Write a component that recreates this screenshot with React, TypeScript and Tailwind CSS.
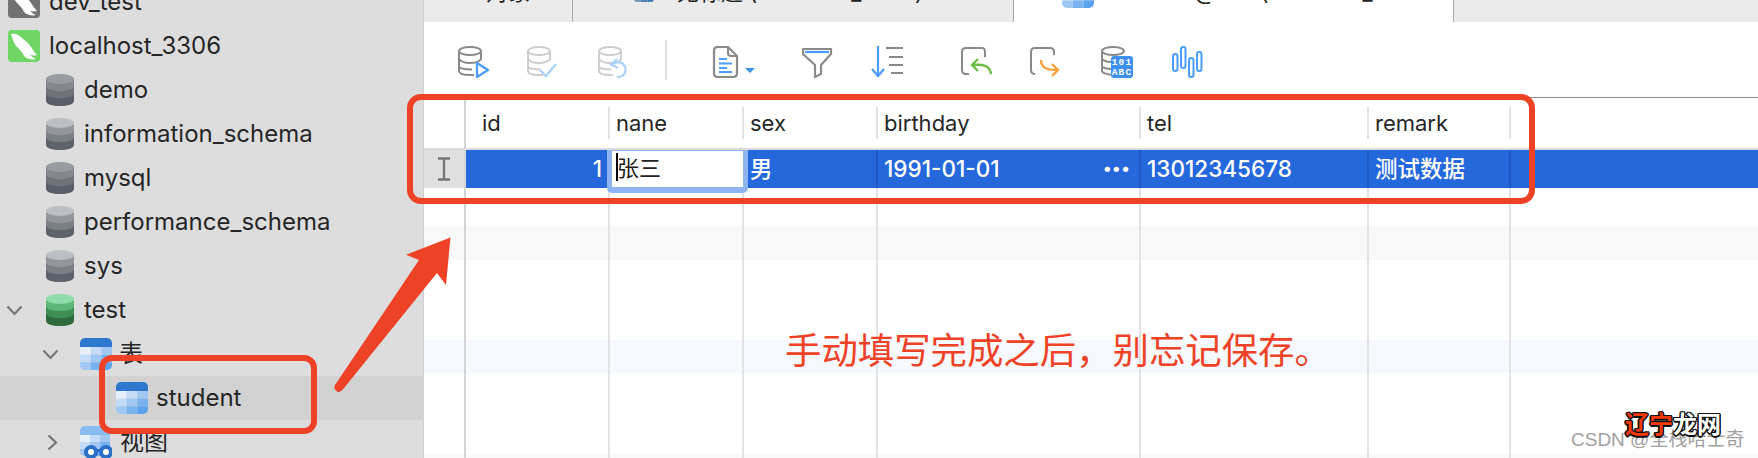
import React from "react";

function Dolphin({ bg }: { bg: string }) {
  return (
    <svg width="32" height="32" viewBox="0 0 32 32" className="shrink-0">
      <rect width="32" height="32" rx="4" fill={bg} />
      <path d="M3 4 C6 3 10 4 13 7 C16 10 20 12 23 17 C25 20 27 23 29 25 C27 26 24 25 22 25 C24 27 26 28 28 29 C24 30 19 29 16 26 C15 24 14 22 12 20 C9 17 6 14 5 10 Z" fill="#fff" />
    </svg>
  );
}

function Db({ c }: { c: string[] }) {
  return (
    <svg width="28" height="32" viewBox="0 0 28 32" className="shrink-0">
      <path d="M0 5 V27 C0 30 6 32 14 32 C22 32 28 30 28 27 V5 Z" fill={c[3]} />
      <path d="M0 5 V19 C0 22 6 24 14 24 C22 24 28 22 28 19 V5 Z" fill={c[2]} />
      <path d="M0 5 V12 C0 15 6 17 14 17 C22 17 28 15 28 12 V5 Z" fill={c[1]} />
      <ellipse cx="14" cy="5" rx="14" ry="5" fill={c[0]} />
    </svg>
  );
}

function TableIcon({ size = 32, className = "" }: { size?: number; className?: string }) {
  const cells = ["#e6f1fd", "#c4dcf7", "#a0c8f3", "#c4dcf7", "#a0c8f3", "#78b3f0", "#a0c8f3", "#78b3f0", "#5aa3ec"];
  return (
    <svg width={size} height={size} viewBox="0 0 32 32" className={`shrink-0 ${className}`}>
      <defs>
        <clipPath id="tbl"><rect width="32" height="32" rx="5" /></clipPath>
      </defs>
      <g clipPath="url(#tbl)">
        <rect width="32" height="9" fill="#2f78d0" />
        {cells.map((c, i) => (
          <rect key={i} x={(i % 3) * 10.67} y={9 + Math.floor(i / 3) * 7.67} width="10.67" height="7.67" fill={c} />
        ))}
      </g>
    </svg>
  );
}

function ViewIcon() {
  const cells = ["#e6f1fd", "#c4dcf7", "#a0c8f3", "#c4dcf7", "#a0c8f3", "#78b3f0", "#a0c8f3", "#78b3f0", "#5aa3ec"];
  return (
    <svg width="32" height="32" viewBox="0 0 32 32" className="shrink-0">
      <defs>
        <clipPath id="vw"><rect width="30" height="30" rx="5" /></clipPath>
      </defs>
      <g clipPath="url(#vw)">
        <rect width="30" height="9" fill="#8bbcf0" />
        {cells.map((c, i) => (
          <rect key={i} x={(i % 3) * 10} y={9 + Math.floor(i / 3) * 7} width="10" height="7" fill={c} />
        ))}
      </g>
      <rect x="10" y="23" width="12" height="3" fill="#2a70c8" />
      <circle cx="11" cy="26" r="5" fill="#fff" stroke="#2a70c8" strokeWidth="4" />
      <circle cx="26" cy="26" r="5" fill="#fff" stroke="#2a70c8" strokeWidth="4" />
    </svg>
  );
}

function ChevDown() {
  return (
    <svg width="17" height="11" viewBox="0 0 17 11" className="shrink-0">
      <path d="M1.5 1.5 L8.5 9 L15.5 1.5" fill="none" stroke="#777" strokeWidth="2.2" />
    </svg>
  );
}

function ChevRight() {
  return (
    <svg width="11" height="17" viewBox="0 0 11 17" className="shrink-0">
      <path d="M1.5 1.5 L9 8.5 L1.5 15.5" fill="none" stroke="#777" strokeWidth="2.2" />
    </svg>
  );
}

const dark = ["#989ba0", "#83878d", "#6f747b", "#5a5f67"];
const light = ["#bcbfc3", "#93979c", "#7b7f86", "#5e636b"];
const green = ["#8fdcaa", "#5cb874", "#3f8f55", "#2f6b3f"];

function Sidebar() {
  const label = "text-[24px] text-[#262626] whitespace-nowrap";
  return (
    <div className="w-[424px] shrink-0 bg-[#dddddd] border-r border-[#d0d0d0] -mt-[20px] h-[500px] overflow-hidden">
      <div className="flex items-center h-[44px] pl-[8px] gap-[9px]">
        <Dolphin bg="#727272" />
        <span className={label}>dev_test</span>
      </div>
      <div className="flex items-center h-[44px] pl-[8px] gap-[9px]">
        <Dolphin bg="#6fd565" />
        <span className={label}>localhost_3306</span>
      </div>
      {[
        ["demo", dark],
        ["information_schema", light],
        ["mysql", dark],
        ["performance_schema", light],
        ["sys", light],
      ].map(([name, c]) => (
        <div key={name as string} className="flex items-center h-[44px] pl-[46px] gap-[10px]">
          <Db c={c as string[]} />
          <span className={label}>{name as string}</span>
        </div>
      ))}
      <div className="flex items-center h-[44px] pl-[6px]">
        <div className="mr-[23px]"><ChevDown /></div>
        <Db c={green} />
        <span className={`${label} ml-[10px]`}>test</span>
      </div>
      <div className="flex items-center h-[44px] pl-[42px]">
        <div className="mr-[21px]"><ChevDown /></div>
        <TableIcon />
        <span className={`${label} ml-[7px]`}>表</span>
      </div>
      <div className="flex items-center h-[44px] pl-[116px] gap-[8px] bg-[#d2d2d2]">
        <TableIcon />
        <span className={label}>student</span>
      </div>
      <div className="flex items-center h-[44px] pl-[47px]">
        <div className="mr-[22px] flex"><ChevRight /></div>
        <ViewIcon />
        <span className={`${label} ml-[8px]`}>视图</span>
      </div>
    </div>
  );
}

function Tabs() {
  return (
    <div className="flex h-[22px] shrink-0 bg-[#ebebeb] overflow-hidden text-[22px] text-[#222]">
      <div className="w-[149px] shrink-0 border-r border-[#aaaaaa] pl-[62px]">
        <div className="-mt-[24px] flex items-center h-[32px]">对象</div>
      </div>
      <div className="w-[440px] shrink-0 pl-[61px]">
        <div className="-mt-[24px] flex items-center h-[32px] whitespace-nowrap">
          <TableIcon size={20} className="brightness-75" />
          <span className="ml-[23px]">无标题 (localhost_3306)</span>
        </div>
      </div>
      <div className="w-[441px] shrink-0 bg-white border-x border-[#aaaaaa] pl-[48px] overflow-hidden">
        <div className="-mt-[24px] flex items-center h-[32px] whitespace-nowrap">
          <TableIcon />
          <span className="ml-[16px]">student @test (localhost_33</span>
        </div>
      </div>
    </div>
  );
}

const G = "#8a8a8a";
const B = "#4a9cff";
const FG = "#cdcdcd";
const FB = "#abd2fb";

function Cyl({ s }: { s: string }) {
  return (
    <g fill="none" stroke={s} strokeWidth="2">
      <ellipse cx="12" cy="5" rx="11" ry="4" />
      <path d="M1 5 V25 C1 27 4 29 12 29 H16" />
      <path d="M23 5 V14" />
      <path d="M1 13 C3 16 8 17 12 17 C16 17 21 16 23 13" />
      <path d="M1 21 C3 23 8 23.5 14 23.5" />
    </g>
  );
}

function Tool({ w = 32, className = "", children }: { w?: number; className?: string; children: React.ReactNode }) {
  return (
    <svg width={w} height="32" viewBox={`0 0 ${w} 32`} className={`shrink-0 ${className}`}>
      {children}
    </svg>
  );
}

function Toolbar() {
  return (
    <div className="flex items-start h-[76px] shrink-0 pt-[24px] pl-[34px] border-b border-[#8a8a8a]">
      <Tool>
        <Cyl s={G} />
        <path d="M19 17 L30 24 L19 31 Z" fill="#fff" stroke={B} strokeWidth="2.2" strokeLinejoin="round" />
      </Tool>
      <Tool className="ml-[37px]">
        <Cyl s={FG} />
        <path d="M13 24 L19 30 L29 18" fill="none" stroke={FB} strokeWidth="2.4" />
      </Tool>
      <Tool className="ml-[39px]">
        <Cyl s={FG} />
        <circle cx="21" cy="24" r="8" fill="#fff" />
        <path d="M19 31 A7.5 7.5 0 1 0 15 18" fill="none" stroke={FB} strokeWidth="2.2" />
        <path d="M19 13 L13 18.5 L20 22" fill="none" stroke={FB} strokeWidth="2.2" />
      </Tool>
      <div className="ml-[35px] -mt-[6px] w-[2px] h-[40px] bg-[#e0e0e0]" />
      <Tool w={46} className="ml-[43px]">
        <path d="M8 1 H18 L27 10 V27 Q27 31 23 31 H8 Q4 31 4 27 V5 Q4 1 8 1 Z" fill="none" stroke={G} strokeWidth="2.2" />
        <path d="M18 1 V7 Q18 10 21 10 H27" fill="none" stroke={G} strokeWidth="2" />
        <path d="M9 13 H17 M9 17.5 H22 M9 22 H17 M9 26 H22" stroke={B} strokeWidth="2" />
        <path d="M35 22 H45 L40 27 Z" fill="#3f8fef" />
      </Tool>
      <Tool className="ml-[46px]">
        <path d="M1 3 H29 V8 L19 19 V28 L13 31 V19 L1 8 Z" fill="none" stroke={G} strokeWidth="2.2" strokeLinejoin="round" />
        <path d="M3 6 H27" stroke={B} strokeWidth="2.2" />
      </Tool>
      <Tool className="ml-[37px]">
        <path d="M7 0 V29 M1 23 L7 30 L13 23" fill="none" stroke={B} strokeWidth="2.2" />
        <path d="M15 2 H32 M18 11 H32 M18 19 H32 M20 27 H32" stroke={G} strokeWidth="2.2" />
      </Tool>
      <Tool className="ml-[57px]">
        <path d="M22 2 H6 Q2 2 2 6 V24 Q2 28 6 28 H9" fill="none" stroke={G} strokeWidth="2" />
        <path d="M22 2 Q25 2 25 6 V11" fill="none" stroke={G} strokeWidth="2" />
        <path d="M31 28 C30 20 24 18 13 19 M18 13 L12 19 L18 25" fill="none" stroke="#6cbd45" strokeWidth="2.4" />
      </Tool>
      <Tool className="ml-[37px]">
        <path d="M6 28 Q2 28 2 24 V6 Q2 2 6 2 H21 Q25 2 25 6 V9" fill="none" stroke={G} strokeWidth="2" />
        <path d="M12 14 C12 22 18 24 28 24 M23 18 L29 24 L23 30" fill="none" stroke="#f6a13c" strokeWidth="2.4" />
      </Tool>
      <Tool className="ml-[40px]">
        <path d="M1 5 V25 C1 27 4 28 11 29 M1 13 C3 15 6 16 10 16 M1 21 C3 22 6 23 10 23" fill="none" stroke={G} strokeWidth="2" />
        <ellipse cx="12" cy="5" rx="11" ry="4" fill="none" stroke={G} strokeWidth="2" />
        <rect x="10" y="10" width="22" height="22" rx="3" fill="#3f8fef" />
        <text x="21" y="19" textAnchor="middle" fontSize="9.5" fontWeight="700" fill="#fff" fontFamily="Liberation Mono, monospace" letterSpacing="1.2">101</text>
        <text x="21" y="29" textAnchor="middle" fontSize="9.5" fontWeight="700" fill="#fff" fontFamily="Liberation Mono, monospace" letterSpacing="1.2">ABC</text>
      </Tool>
      <Tool className="ml-[38px]">
        <rect x="2" y="8" width="4.5" height="17" rx="2.25" fill="none" stroke={B} strokeWidth="2" />
        <rect x="10" y="1" width="4.5" height="21" rx="2.25" fill="none" stroke={B} strokeWidth="2" />
        <rect x="18" y="12" width="4.5" height="19" rx="2.25" fill="none" stroke={B} strokeWidth="2" />
        <rect x="26" y="6" width="4.5" height="19" rx="2.25" fill="none" stroke={B} strokeWidth="2" />
      </Tool>
    </div>
  );
}

const colW = ["w-[144px]", "w-[134px]", "w-[134px]", "w-[263px]", "w-[228px]", "w-[142px]"];
const heads = ["id", "nane", "sex", "birthday", "tel", "remark"];

function Header() {
  return (
    <div className="flex h-[52px] shrink-0 border-b-2 border-[#dcdcdc] text-[22px] text-[#262626]">
      <div className="w-[42px] shrink-0 border-r-2 border-[#d4d4d4]" />
      {heads.map((h, i) => (
        <div key={h} className={`${colW[i]} shrink-0 flex items-center`}>
          <div className={`w-full h-[32px] border-r-2 border-[#e2e2e2] flex items-center ${i === 0 ? "pl-[16px]" : "pl-[6px]"}`}>
            {h}
          </div>
        </div>
      ))}
    </div>
  );
}

function DataRow() {
  const cell = "shrink-0 h-full border-r-2 border-[#2159c2] flex items-center pl-[6px] whitespace-nowrap";
  return (
    <div className="flex h-[38px] shrink-0 bg-[#2468dc] text-white text-[22.5px] font-medium">
      <div className="w-[42px] shrink-0 bg-[#e0e0e0] border-r-2 border-[#d4d4d4] flex items-center justify-center">
        <svg width="14" height="24" viewBox="0 0 14 24">
          <path d="M1 1.5 H13 M7 1.5 V22.5 M1 22.5 H13" stroke="#777" strokeWidth="2.4" fill="none" />
        </svg>
      </div>
      <div className={`${colW[0]} ${cell} justify-end pr-[6px] border-r-0`}>1</div>
      <div className={`${colW[1]} shrink-0 relative`}>
        <div className="absolute -left-[3px] top-0 w-[141px] h-[43px] border-x-[5px] border-t border-b-[6px] border-[#8fb4f2] rounded-b-[5px] bg-white z-10 flex items-center text-[#222] font-normal text-[22px] pl-[4px] pb-[2px]">
          <span className="w-[2px] h-[28px] bg-black -mr-[1px] -mt-[2px]" />
          <span>张三</span>
        </div>
      </div>
      <div className={`${colW[2]} ${cell}`}>男</div>
      <div className={`${colW[3]} ${cell} justify-between pr-[9px]`}>
        <span>1991-01-01</span>
        <span className="text-[17px]">•••</span>
      </div>
      <div className={`${colW[4]} ${cell}`}>13012345678</div>
      <div className={`${colW[5]} ${cell}`}>测试数据</div>
    </div>
  );
}

const bodyRows = [
  { h: "h-[38px]", bg: "bg-white" },
  { h: "h-[34px]", bg: "bg-[#f8f8f8]" },
  { h: "h-[80px]", bg: "bg-white" },
  { h: "h-[33px]", bg: "bg-[#f5f8fd]" },
  { h: "h-[81px]", bg: "bg-white" },
  { h: "h-[38px]", bg: "bg-[#f8f8f8]" },
];

function EmptyRow({ h, bg }: { h: string; bg: string }) {
  return (
    <div className={`flex shrink-0 ${h} ${bg}`}>
      <div className="w-[42px] shrink-0 border-r-2 border-[#d4d4d4]" />
      {colW.map((w, i) => (
        <div key={i} className={`${w} shrink-0 border-r-2 border-[#e2e2e2]`} />
      ))}
    </div>
  );
}

export default function App() {
  return (
    <div className="relative w-[1758px] h-[458px] overflow-hidden bg-white flex font-['Inter','Noto_Sans_CJK_SC',sans-serif]">
      <Sidebar />
      <div className="flex-1 flex flex-col min-w-0">
        <Tabs />
        <Toolbar />
        <Header />
        <DataRow />
        {bodyRows.map((r, i) => (
          <EmptyRow key={i} h={r.h} bg={r.bg} />
        ))}
      </div>

      {/* annotations on top of the screenshot */}
      <div className="absolute left-[407px] top-[94px] w-[1128px] h-[110px] border-[6px] border-[#ee4227] rounded-[14px] z-20" />
      <div className="absolute left-[99px] top-[355px] w-[218px] h-[79px] border-[6px] border-[#ee4227] rounded-[13px] z-20" />
      <svg className="absolute left-[330px] top-[235px] z-20" width="125" height="160" viewBox="330 235 125 160">
        <path d="M450.5 237.5 L406 254.7 L419 260 L335 385 Q333 390 338 392 Q341 392 344 388 L437 273 L446 285 Z" fill="#ee4227" />
      </svg>
      <div className="absolute left-[785px] top-[329px] z-20 text-[36.4px] leading-[44px] text-[#ee4227] whitespace-nowrap">
        手动填写完成之后，别忘记保存。
      </div>
      <div className="absolute left-[1571px] top-[429px] z-20 text-[19px] leading-[22px] text-[#a0a0a0] whitespace-nowrap font-['Liberation_Sans','Noto_Sans_CJK_SC',sans-serif]">
        CSDN @全栈哈士奇
      </div>
      <div className="absolute left-[1625px] top-[411px] z-30 text-[24px] leading-[28px] font-bold whitespace-nowrap [text-shadow:-1.5px_0_0_#111,1.5px_0_0_#111,0_-1.5px_0_#111,0_1.5px_0_#111,-1px_-1px_0_#111,1px_1px_0_#111,1px_-1px_0_#111,-1px_1px_0_#111]">
        <span className="text-[#f03a0c]">辽宁</span>
        <span className="text-white">龙网</span>
      </div>
    </div>
  );
}
